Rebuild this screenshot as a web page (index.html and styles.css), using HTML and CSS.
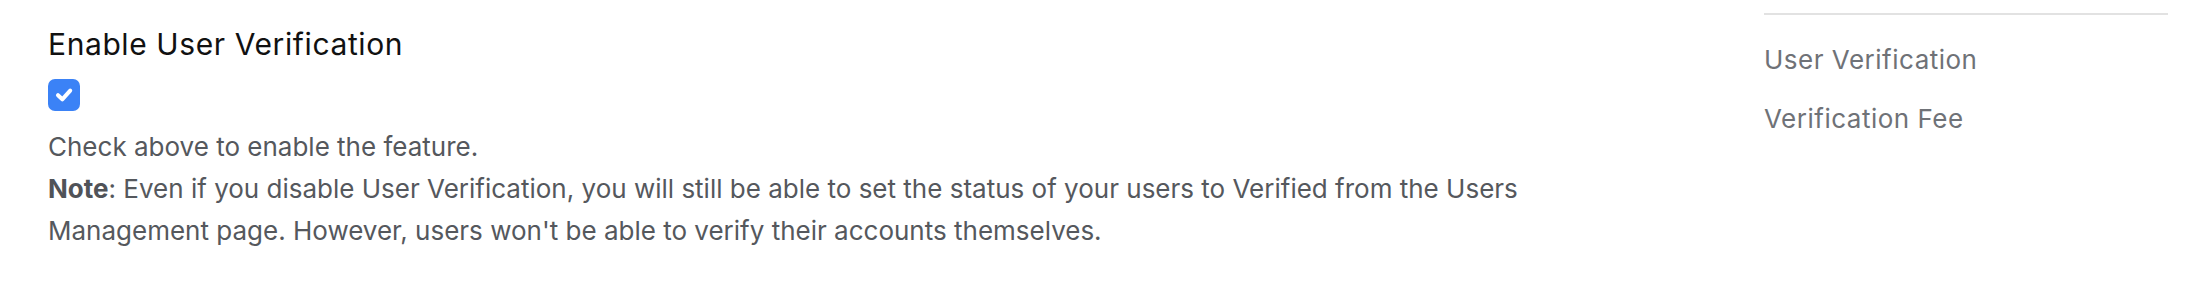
FILE: index.html
```html
<!DOCTYPE html>
<html lang="en">
<head>
<meta charset="utf-8">
<title>Enable User Verification</title>
<link rel="stylesheet" href="styles.css">
</head>
<body>
<div class="page">
  <main class="main">
    <h2 class="title">Enable User Verification</h2>
    <label class="checkbox">
      <input type="checkbox" checked>
      <span class="box">
        <svg viewBox="0 0 32 32" width="32" height="32" aria-hidden="true">
          <path d="M10 16.2 L14.3 20.3 L22.2 11.6" fill="none" stroke="#fff" stroke-width="4" stroke-linecap="round" stroke-linejoin="round"/>
        </svg>
      </span>
    </label>
    <div class="help">
      <p>Check above to enable the feature.</p>
      <p><strong>Note</strong>: Even if you disable User Verification, you will still be able to set the status of your users to Verified from the Users Management page. However, users won't be able to verify their accounts themselves.</p>
    </div>
  </main>
  <aside class="side">
    <nav class="side-nav">
      <a class="side-link">User Verification</a>
      <a class="side-link">Verification Fee</a>
    </nav>
  </aside>
</div>
</body>
</html>
```
FILE: styles.css
```css
* { box-sizing: border-box; }
html, body { margin: 0; padding: 0; background: #fff; }
body {
  font-family: Inter, "Noto Sans", sans-serif;
  font-variant-ligatures: none;
}

.page {
  display: flex;
  justify-content: space-between;
  padding: 0 32px 0 48px;
}

.main {
  width: 1540px;
  padding-top: 24px;
}

.title {
  margin: 0;
  font-size: 30px;
  line-height: 40px;
  font-weight: 400;
  letter-spacing: 0.6px;
  color: #111;
}

.checkbox {
  display: block;
  width: 32px;
  height: 32px;
  margin-top: 15px;
  position: relative;
}
.checkbox input {
  position: absolute;
  opacity: 0;
  margin: 0;
  width: 32px;
  height: 32px;
}
.box {
  display: block;
  width: 32px;
  height: 32px;
  border-radius: 7px;
  background: #3b82f6;
}
.box svg { display: block; }

.help {
  margin-top: 15px;
  font-size: 26px;
  line-height: 42px;
  color: #55585d;
}
.help p { margin: 0; }
.help strong { font-weight: 700; color: #505358; }

.side {
  width: 404px;
}
.side-nav {
  border-top: 2px solid #e2e2e2;
  margin-top: 13px;
  padding-top: 15px;
  display: flex;
  flex-direction: column;
}
.side-link {
  font-size: 26px;
  line-height: 59px;
  letter-spacing: 0.5px;
  color: #6f7277;
}
```
